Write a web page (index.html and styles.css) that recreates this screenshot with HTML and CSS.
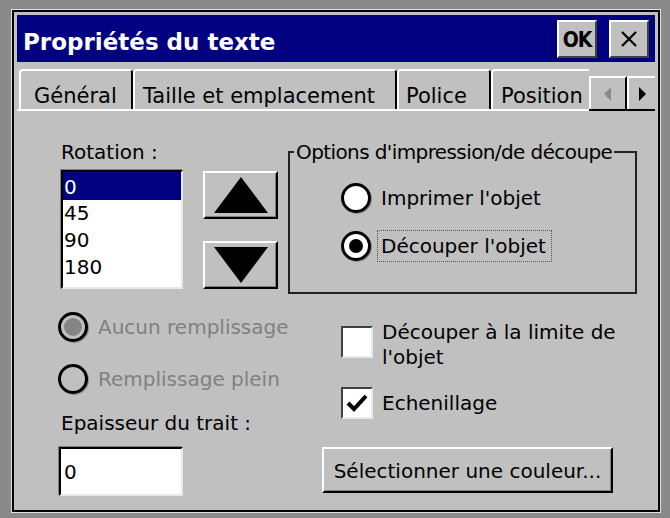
FILE: index.html
```html
<!DOCTYPE html>
<html lang="fr">

<head>
    <meta charset="UTF-8">
    <title>Propriétés du texte</title>
    <link rel="stylesheet" href="styles.css">
</head>

<body>
    <div class="window">
        <div class="titlebar">
            <span class="title">Propriétés du texte</span>
            <button class="cap-btn ok">OK</button>
            <button class="cap-btn close">
                <svg width="20" height="20" viewBox="0 0 20 20">
                    <path d="M3 3 L17 17 M17 3 L3 17" stroke="#000" stroke-width="2.2" />
                </svg>
            </button>
        </div>

        <div class="tabs">
            <div class="tab-list">
                <div class="tab active t-general">Général</div>
                <div class="tab t-taille">Taille et emplacement</div>
                <div class="tab t-police">Police</div>
                <div class="tab t-position">Position</div>
            </div>
            <div class="tab-arrows">
                <span class="arrow left">
                    <svg width="10" height="14" viewBox="0 0 10 14"><path d="M8 0 L1 7 L8 14 Z" fill="#8a8a8a" /></svg>
                </span>
                <span class="arrow right">
                    <svg width="10" height="14" viewBox="0 0 10 14"><path d="M2 0 L9 7 L2 14 Z" fill="#000" /></svg>
                </span>
            </div>
        </div>

        <div class="panel">
            <div class="rotation">
                <div class="label">Rotation :</div>
                <div class="rotation-row">
                    <ul class="listbox">
                        <li class="selected">0</li>
                        <li>45</li>
                        <li>90</li>
                        <li>180</li>
                    </ul>
                    <div class="spin">
                        <button class="btn3d spin-btn">
                            <svg width="54" height="36" viewBox="0 0 54 36"><path d="M27 0 L54 36 L0 36 Z" fill="#000" /></svg>
                        </button>
                        <button class="btn3d spin-btn">
                            <svg width="54" height="36" viewBox="0 0 54 36"><path d="M0 0 L54 0 L27 36 Z" fill="#000" /></svg>
                        </button>
                    </div>
                </div>
            </div>

            <fieldset class="group">
                <legend>Options d'impression/de découpe</legend>
                <div class="group-body">
                    <div class="option">
                        <span class="radio"></span>
                        <span>Imprimer l'objet</span>
                    </div>
                    <div class="option">
                        <span class="radio checked"></span>
                        <span class="focus">Découper l'objet</span>
                    </div>
                </div>
            </fieldset>

            <div class="fill">
                <div class="option disabled">
                    <span class="radio checked"></span>
                    <span>Aucun remplissage</span>
                </div>
                <div class="option disabled">
                    <span class="radio"></span>
                    <span>Remplissage plein</span>
                </div>
                <div class="label stroke-label">Epaisseur du trait :</div>
                <div class="textbox">0</div>
            </div>

            <div class="checks">
                <div class="check-row">
                    <span class="checkbox"></span>
                    <span class="check-text">Découper à la limite de l'objet</span>
                </div>
                <div class="check-row single">
                    <span class="checkbox">
                        <svg width="24" height="22" viewBox="0 0 24 22"><path d="M3 11 L9 17 L21 4" fill="none" stroke="#000" stroke-width="4" /></svg>
                    </span>
                    <span class="check-text">Echenillage</span>
                </div>
                <button class="btn3d color-btn">Sélectionner une couleur...</button>
            </div>
        </div>
    </div>
</body>

</html>
```

FILE: styles.css
```css
* {
    margin: 0;
    padding: 0;
    box-sizing: border-box;
}

body {
    background: #8a8a8a;
    font-family: "DejaVu Sans", Verdana, sans-serif;
    font-size: 20px;
    color: #000;
    padding: 9px 0 0 11px;
}

button {
    font-family: inherit;
    font-size: inherit;
    color: inherit;
}

.window {
    width: 650px;
    height: 504px;
    background: #c0c0c0;
    border: 1px solid #e0e0e0;
    box-shadow: inset 0 0 0 2px #000;
    padding: 5px;
    display: flex;
    flex-direction: column;
}

/* barre de titre */
.titlebar {
    height: 47px;
    background: #000080;
    display: flex;
    align-items: center;
    padding: 0 6px;
}

.title {
    flex: 1;
    color: #fff;
    font-weight: bold;
    font-size: 23px;
    padding-top: 7px;
}

.cap-btn {
    width: 40px;
    height: 38px;
    background: #c0c0c0;
    border: 2px solid;
    border-color: #fff #404040 #404040 #fff;
    display: flex;
    align-items: center;
    justify-content: center;
}

.ok {
    font-family: "DejaVu Sans Condensed", "DejaVu Sans", sans-serif;
    font-weight: bold;
    font-size: 21px;
    letter-spacing: -1px;
    padding-top: 2px;
}

.close {
    margin-left: 12px;
}

/* onglets */
.tabs {
    height: 49px;
    display: flex;
    align-items: flex-end;
    border-bottom: 2px solid #fff;
}

.tab-list {
    flex: 1;
    display: flex;
    align-items: flex-end;
    overflow: hidden;
    padding-left: 2px;
}

.tab {
    flex: none;
    height: 40px;
    line-height: 28px;
    font-size: 21px;
    padding-top: 11px;
    border-top: 2px solid #fff;
    border-left: 2px solid #fff;
    border-right: 2px solid #000;
    border-radius: 4px 4px 0 0;
    white-space: nowrap;
}

.tab.active {
    height: 42px;
    margin-bottom: -2px;
    background: #c0c0c0;
    position: relative;
}

.t-general { width: 114px; padding-left: 13px; }
.t-taille { width: 264px; padding-left: 8px; }
.t-police { width: 94px; padding-left: 7px; }
.t-position { width: 120px; padding-left: 8px; }

.tab-arrows {
    flex: none;
    display: flex;
    height: 35px;
    margin-bottom: -2px;
    border-bottom: 2px solid #000;
}

.arrow {
    height: 100%;
    display: flex;
    align-items: center;
    justify-content: center;
    background: #c0c0c0;
    border-top: 2px solid #fff;
    border-left: 2px solid #fff;
}

.arrow.left {
    width: 38px;
    border-right: 2px solid #000;
}

.arrow.right {
    width: 28px;
}

/* contenu */
.panel {
    flex: 1;
    display: grid;
    grid-template-columns: 229px 349px;
    grid-template-rows: 154px auto;
    row-gap: 18px;
    padding: 29px 0 0 42px;
    white-space: nowrap;
}

.label {
    line-height: 24px;
    padding-left: 2px;
}

.rotation-row {
    display: flex;
    margin-top: 6px;
    padding-left: 2px;
}

.listbox {
    list-style: none;
    width: 122px;
    height: 119px;
    background: #fff;
    border: 2px solid;
    border-color: #000 #e8e8e8 #e8e8e8 #000;
    box-shadow: -1px -1px 0 #808080;
}

.listbox li {
    height: 27px;
    line-height: 27px;
    padding-left: 1px;
}

.listbox li.selected {
    background: #000080;
    color: #fff;
    height: 28px;
    line-height: 30px;
}

.spin {
    display: flex;
    flex-direction: column;
    gap: 22px;
    margin-left: 20px;
    padding-top: 1px;
}

.btn3d {
    background: #c0c0c0;
    border: 2px solid;
    border-color: #fff #000 #000 #fff;
    box-shadow: inset -1px -1px 0 #808080;
}

.spin-btn {
    width: 75px;
    height: 48px;
    display: flex;
    align-items: center;
    justify-content: center;
}

.group {
    width: 349px;
    min-width: 0;
    border: 2px solid #222;
}

.group legend {
    margin-left: 4px;
    padding: 0 2px;
    line-height: 24px;
    font-size: 20px;
    letter-spacing: -0.6px;
}

.group-body {
    padding: 19px 0 0 51px;
}

.option {
    display: flex;
    align-items: center;
    height: 30px;
    gap: 10px;
}

.group .option + .option {
    margin-top: 18px;
}

.radio {
    flex: none;
    width: 30px;
    height: 30px;
    border-radius: 50%;
    background: #fff;
    border: 3px solid #000;
    box-shadow: 1px 1px 0 #8a8a8a;
    display: flex;
    align-items: center;
    justify-content: center;
}

.radio.checked::after {
    content: "";
    width: 14px;
    height: 14px;
    border-radius: 50%;
    background: #000;
}

.focus {
    outline: 1px dotted #555;
    outline-offset: 3px;
    padding-right: 2px;
}

.disabled {
    color: #808080;
}

.disabled .radio {
    background: #c0c0c0;
    margin-left: -1px;
}

.disabled .radio.checked::after {
    width: 18px;
    height: 18px;
    background: #858585;
}

.fill .option + .option {
    margin-top: 22px;
}

.stroke-label {
    margin-top: 17px;
}

.textbox {
    width: 124px;
    height: 49px;
    margin-top: 12px;
    background: #fff;
    border: 2px solid;
    border-color: #000 #e8e8e8 #e8e8e8 #000;
    box-shadow: -1px -1px 0 #808080;
    padding: 8px 0 0 3px;
    line-height: 30px;
}

.checks {
    display: flex;
    flex-direction: column;
    align-items: flex-start;
    padding-left: 53px;
}

.check-row {
    display: flex;
    align-items: flex-start;
    gap: 9px;
}

.checkbox {
    flex: none;
    width: 32px;
    height: 32px;
    margin-top: 14px;
    background: #fff;
    border: 2px solid;
    border-color: #404040 #e8e8e8 #e8e8e8 #404040;
    display: flex;
    align-items: center;
    justify-content: center;
}

.check-text {
    width: 240px;
    line-height: 25px;
    margin-top: 8px;
    white-space: normal;
}

.check-row.single {
    margin-top: 17px;
    align-items: center;
}

.check-row.single .checkbox,
.check-row.single .check-text {
    margin-top: 0;
}

.color-btn {
    width: 291px;
    height: 46px;
    margin: 28px 0 0 -19px;
    padding-top: 2px;
}
```
